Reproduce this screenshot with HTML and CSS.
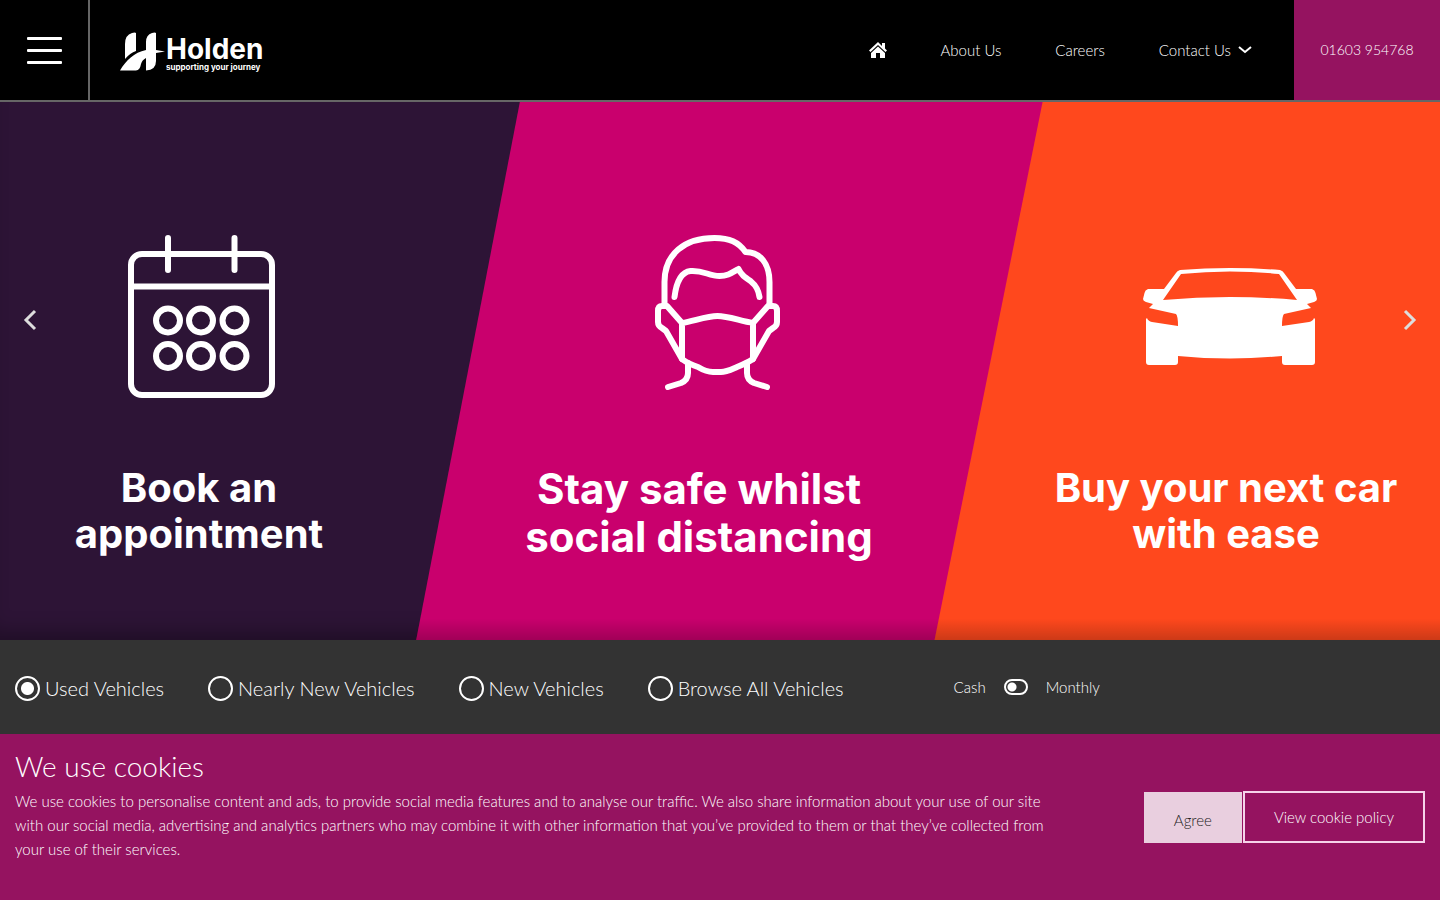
FILE: index.html
```html
<!DOCTYPE html>
<html lang="en">
<head>
    <meta charset="UTF-8">
    <meta name="viewport" content="width=device-width, initial-scale=1.0">
    <title>Holden - supporting your journey</title>
    <link rel="stylesheet" href="styles.css">
</head>
<body>
    <header class="header">
        <button class="menu-button" aria-label="Open menu">
            <span></span>
            <span></span>
            <span></span>
        </button>
        <a class="logo" href="#">
            <svg class="logo-mark" viewBox="120 32 46 39" aria-hidden="true">
                <path d="M125 59V44q0-9 7-11 3-1 4 0V51q-6 2-11 8z"/>
                <path d="M146 50V42q0-7 6-9 3-1 4 0V50l9 1.500-9 1.500V61q0 9-10 9.500V58q-4 2-5 6-1 6-5 6.500H120c6-10 14-18 26-20.500z"/>
            </svg>
            <span class="logo-text">
                <span class="logo-name">Holden</span>
                <span class="logo-tagline">supporting your journey</span>
            </span>
        </a>
        <nav class="nav">
            <a href="#" aria-label="Home">
                <svg class="home-icon" viewBox="0 0 18 18" aria-hidden="true">
                    <path d="M9 1 0 9.500l1.500 1.500L9 4l7.500 7L18 9.500l-2-2V2h-3v3z"/>
                    <path d="M9 5.500 2 12v5h5v-5h4v5h5v-5z"/>
                </svg>
            </a>
            <a href="#">About Us</a>
            <a href="#">Careers</a>
            <a href="#">Contact Us
                <svg class="nav-arrow" viewBox="0 0 14 8" aria-hidden="true"><path d="M1 1l6 5 6-5"/></svg>
            </a>
        </nav>
        <a class="phone" href="tel:01603954768">01603 954768</a>
    </header>

    <main>
        <section class="hero">
            <div class="hero-panel">
                <svg viewBox="118 233 162 168" aria-hidden="true">
                    <g class="line-icon">
                        <rect x="131" y="254" width="141" height="141" rx="11"/>
                        <path d="M131 286.500h141M168 238v32M234.500 238v32"/>
                        <circle cx="168" cy="320.500" r="12"/>
                        <circle cx="201" cy="320.500" r="12"/>
                        <circle cx="234.500" cy="320.500" r="12"/>
                        <circle cx="168" cy="356" r="12"/>
                        <circle cx="201" cy="356" r="12"/>
                        <circle cx="234.500" cy="356" r="12"/>
                    </g>
                </svg>
                <h2>Book an<br>appointment</h2>
            </div>
            <div class="hero-panel hero-panel-large">
                <svg viewBox="615 233 168 168" aria-hidden="true">
                    <g class="line-icon">
                        <path d="M664.500 305v-23c0-28 20-44 50-44 15 0 24 4 31 14 15 0 24 12 24 30v23"/>
                        <path d="M674.500 297c2-16 7-25 16-26 13-1 18 5 29 5 8 0 12-3 19-7 3 6 6 8 12 12 6 5 8 9 9 16"/>
                        <path d="M682 323l-15-17h-5q-4 0-4 5v11q0 4 4 6l4 3 16 28"/>
                        <path d="M753 323l15-17h5q4 0 4 5v11q0 4-4 6l-4 3-16 28"/>
                        <path d="M682 323c12-2 25-7 35.500-7s23 5 35.500 7v36c-6 4-11 6-16 8-7 3-11 5-16 5h-8c-5 0-10-2-15-5-6-2-11-4-16-8z"/>
                        <path d="M688 363v10q0 7-7 10l-13 4M747 363v10q0 7 7 10l13 4"/>
                    </g>
                </svg>
                <h2>Stay safe whilst<br>social distancing</h2>
            </div>
            <div class="hero-panel">
                <svg viewBox="1132 233 188 168" aria-hidden="true">
                    <path fill-rule="evenodd" d="M1180 270Q1230 266 1280 270q3 1 4 3L1296 289H1312Q1315 290 1315.500 293L1317 299Q1317 301 1314 302L1307 304 1311 308 1284 314Q1282 316 1282 326L1309 322Q1313 321 1314 318L1315 319V362q0 3-3 3H1285q-3 0-3-3V356Q1230 361 1178 356V362q0 3-3 3H1149q-3 0-3-3V319L1147 318Q1148 321 1152 322L1178 326Q1178 316 1176 314L1149 308 1153 304 1146 302Q1143 301 1143 299L1144.500 293Q1145 290 1148 289H1164L1176 273q1-2 4-3zM1181 274 1163 300Q1230 294 1297 300L1279 274Q1230 269 1181 274z"/>
                </svg>
                <h2>Buy your next car<br>with ease</h2>
            </div>
            <button class="slide-button slide-prev" aria-label="Previous slide">
                <svg viewBox="0 0 14 22" aria-hidden="true"><path d="M12 2 3 11l9 9"/></svg>
            </button>
            <button class="slide-button slide-next" aria-label="Next slide">
                <svg viewBox="0 0 14 22" aria-hidden="true"><path d="M2 2l9 9-9 9"/></svg>
            </button>
        </section>

        <form class="search-bar">
            <div class="vehicle-types">
                <label><input type="radio" name="type" checked>Used Vehicles</label>
                <label><input type="radio" name="type">Nearly New Vehicles</label>
                <label><input type="radio" name="type">New Vehicles</label>
                <label><input type="radio" name="type">Browse All Vehicles</label>
            </div>
            <div class="payment">
                <label for="payment-switch">Cash</label>
                <input class="switch" type="checkbox" id="payment-switch">
                <label for="payment-switch">Monthly</label>
            </div>
        </form>
    </main>

    <div class="cookies">
        <div class="cookies-text">
            <h3>We use cookies</h3>
            <p>We use cookies to personalise content and ads, to provide social media features and to analyse our traffic. We also share information about your use of our site with our social media, advertising and analytics partners who may combine it with other information that you’ve provided to them or that they’ve collected from your use of their services.</p>
        </div>
        <div class="cookies-buttons">
            <button class="agree-button">Agree</button>
            <a class="policy-button" href="#">View cookie policy</a>
        </div>
    </div>
</body>
</html>
```
FILE: styles.css
```css
* {
    box-sizing: border-box;
}
body {
    margin: 0;
    font-family: Lato, sans-serif;
    font-size: 15px;
    font-weight: 300;
    line-height: 24px;
    color: #fff;
    background-color: #333;
}
a {
    color: inherit;
    text-decoration: none;
}
button {
    font: inherit;
    border: none;
    cursor: pointer;
}

/* Header */
.header {
    display: flex;
    align-items: stretch;
    height: 102px;
    background-color: #000;
    border-bottom: 2px solid #666;
}
.menu-button {
    display: flex;
    flex-direction: column;
    justify-content: center;
    gap: 9px;
    width: 90px;
    padding: 0 26px 0 27px;
    background: none;
    border-right: 2px solid #666;
}
.menu-button span {
    height: 3px;
    background-color: #fff;
    border-radius: 1px;
}
.logo {
    display: flex;
    align-items: center;
    margin-left: 30px;
    padding-top: 3px;
}
.logo-mark {
    width: 46px;
    height: 39px;
    fill: #fff;
}
.logo-text {
    display: flex;
    flex-direction: column;
    padding-top: 2px;
    font-family: Inter, sans-serif;
    font-weight: 700;
}
.logo-name {
    font-size: 28px;
    line-height: 28px;
}
.logo-tagline {
    font-size: 8px;
    line-height: 8px;
}
.nav {
    display: flex;
    align-items: center;
    gap: 54px;
    margin-left: auto;
    margin-right: 42px;
}
.home-icon {
    display: block;
    width: 18px;
    height: 18px;
    fill: #fff;
}
.nav-arrow {
    width: 14px;
    height: 8px;
    margin: 0 0 2px 3px;
    fill: none;
    stroke: #fff;
    stroke-width: 2;
}
.phone {
    display: flex;
    align-items: center;
    justify-content: center;
    width: 146px;
    font-size: 14px;
    background-color: #951360;
}

/* Slider */
.hero {
    position: relative;
    display: grid;
    grid-template-columns: 398fr 614fr 428fr;
    padding: 131px 0 79px;
    background-color: #2d1436;
    box-shadow: inset 0 -20px 20px -12px rgba(0, 0, 0, 0.3);
}
.hero::before,
.hero::after {
    content: "";
    position: absolute;
    inset: 0;
}
.hero::before {
    background: linear-gradient(transparent 96%, rgba(0, 0, 0, 0.2)), #c9006d;
    clip-path: polygon(36.1% 0, 100% 0, 100% 100%, 28.9% 100%);
}
.hero::after {
    background: linear-gradient(transparent 96%, rgba(0, 0, 0, 0.2)), #ff481d;
    clip-path: polygon(72.4% 0, 100% 0, 100% 100%, 64.9% 100%);
}
.hero-panel {
    z-index: 1;
    text-align: center;
}
.hero-panel svg {
    display: block;
    height: 168px;
    margin: 0 auto 64px;
    fill: #fff;
}
.hero-panel .line-icon {
    fill: none;
    stroke: #fff;
    stroke-width: 6;
    stroke-linecap: round;
    stroke-linejoin: round;
}
.hero-panel h2 {
    margin: 0;
    font-family: Inter, sans-serif;
    font-size: 40px;
    font-weight: 700;
    line-height: 46px;
}
.hero-panel-large {
    padding-right: 12px;
}
.hero-panel-large h2 {
    font-size: 42px;
    line-height: 48px;
}
.slide-button {
    position: absolute;
    z-index: 2;
    top: 207px;
    padding: 0;
    background: none;
}
.slide-button svg {
    display: block;
    width: 14px;
    height: 22px;
    fill: none;
    stroke: #ddd;
    stroke-width: 3;
}
.slide-prev {
    left: 23px;
}
.slide-next {
    right: 23px;
}

/* Vehicle search */
.search-bar {
    display: flex;
    align-items: flex-start;
    padding: 35px 15px 200px;
    background-color: #333;
}
.vehicle-types {
    display: flex;
    gap: 44px;
    font-size: 20px;
    line-height: 26px;
}
.vehicle-types label {
    display: flex;
    align-items: center;
    gap: 5px;
}
.vehicle-types input {
    appearance: none;
    width: 25px;
    height: 25px;
    margin: 0;
    border: 2px solid #fff;
    border-radius: 50%;
}
.vehicle-types input:checked {
    background: radial-gradient(circle, #fff 6px, transparent 7px);
}
.payment {
    display: flex;
    align-items: center;
    gap: 18px;
    margin-left: 110px;
}
.switch {
    appearance: none;
    width: 24px;
    height: 16px;
    margin: 0;
    border: 2px solid #fff;
    border-radius: 8px;
    background: radial-gradient(circle at 6px 6px, #fff 4px, transparent 5px);
}

/* Cookie banner */
.cookies {
    position: fixed;
    left: 0;
    right: 0;
    bottom: 0;
    display: flex;
    align-items: center;
    justify-content: space-between;
    padding: 13px 15px 39px;
    background-color: #951360;
}
.cookies-text {
    width: 74%;
}
.cookies h3 {
    margin: 0 0 4px;
    font-size: 28px;
    font-weight: 300;
    line-height: 38px;
}
.cookies p {
    margin: 0;
}
.cookies-buttons {
    display: flex;
    align-items: flex-end;
    gap: 1px;
    margin-top: 26px;
}
.agree-button {
    height: 51px;
    padding: 4px 30px 0;
    color: #222;
    background-color: #e9cfdf;
}
.policy-button {
    padding: 12px 29px;
    border: 2px solid #f6d3ea;
}
```
